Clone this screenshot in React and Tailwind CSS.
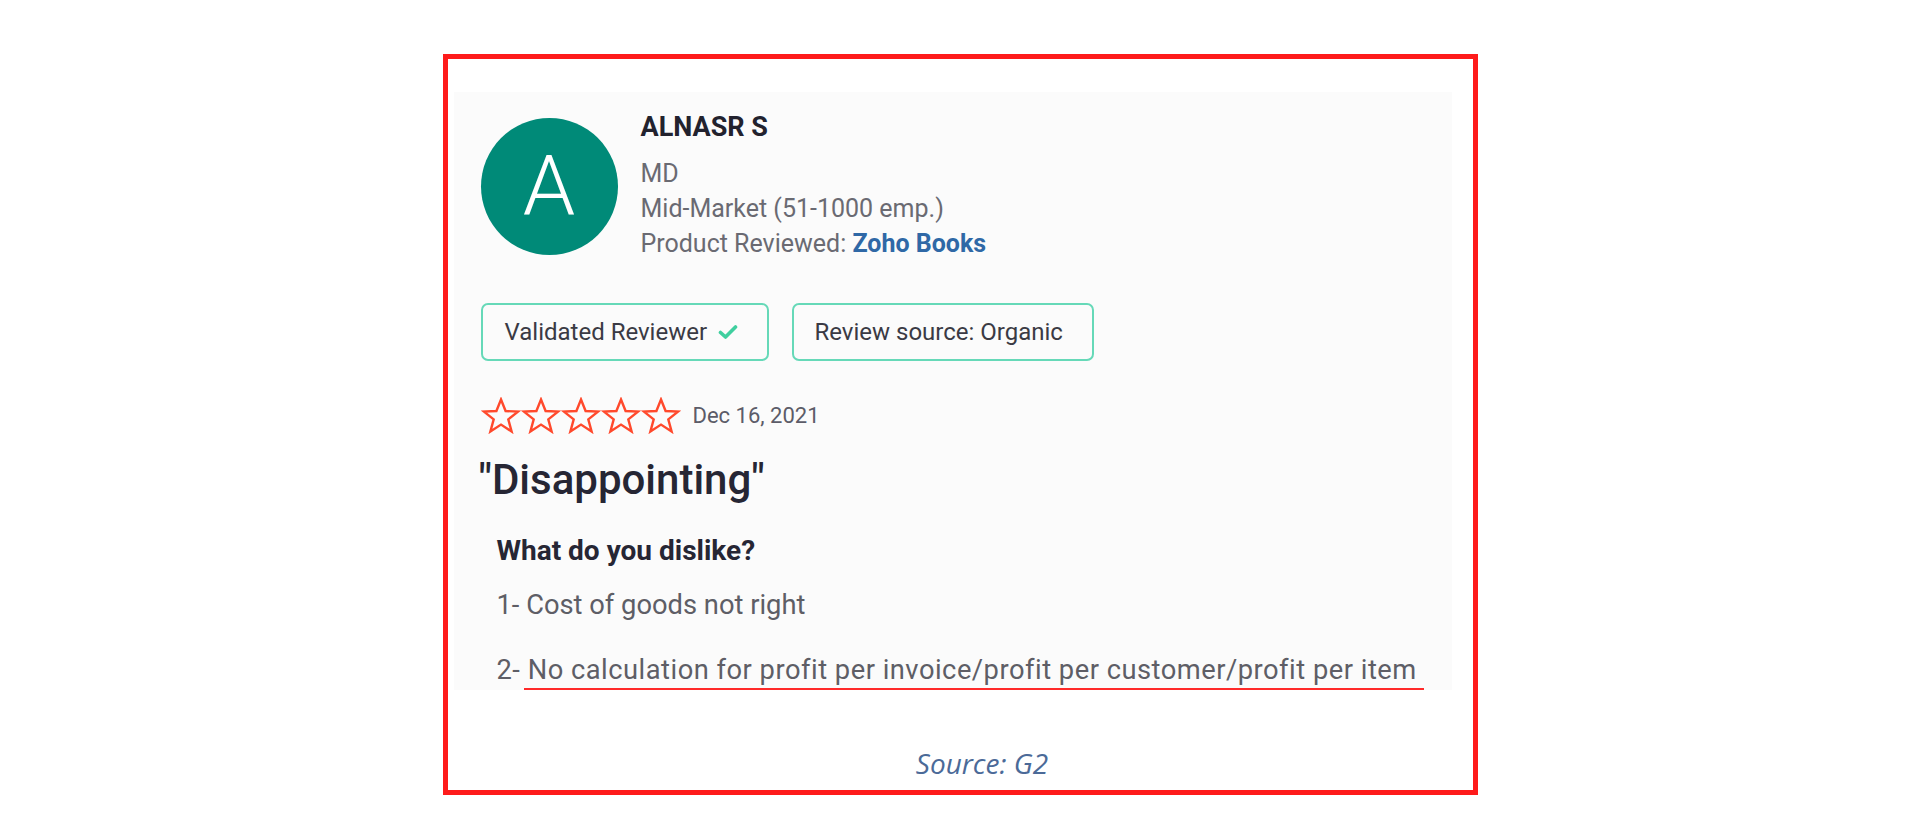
import React from 'react';

const font = { fontFamily: 'Roboto, "Noto Sans", sans-serif' };

function Star() {
  return (
    <svg width="40" height="37" viewBox="0 0 40 37" fill="none">
      <path
        d="M20 2.5 L24.6 14 L37 14.6 L27.3 22.4 L30.6 34.5 L20 27.6 L9.4 34.5 L12.7 22.4 L3 14.6 L15.4 14 Z"
        stroke="#ff492c"
        strokeWidth="2.4"
        strokeLinejoin="miter"
      />
    </svg>
  );
}

function Check() {
  return (
    <svg width="20" height="16" viewBox="0 0 20 16" fill="none">
      <path d="M2.5 8.5 L7.5 13 L17.5 3" stroke="#3fcf9f" strokeWidth="3.6" strokeLinecap="round" strokeLinejoin="round" />
    </svg>
  );
}

export default function App() {
  return (
    <div className="min-h-screen bg-white pt-[54px]" style={font}>
      <div className="mx-auto w-[1035px] h-[741px] border-[5px] border-[#fe1b1b] bg-white px-[6px] pt-[33px]">
        {/* review card */}
        <div className="bg-[#fbfbfb] pl-[27px] pt-[19px] w-[998px]">
          <div className="flex items-start gap-[23px]">
            <div className="mt-[7px] w-[137px] h-[137px] rounded-full bg-[#008a78] flex items-center justify-center shrink-0">
              <span className="text-white text-[84px] font-light leading-none">A</span>
            </div>
            <div>
              <div className="text-[27px] font-bold leading-[32px] text-[#22222e]">ALNASR S</div>
              <div className="mt-[13px] text-[25px] leading-[35px] text-[#6a6a72]">
                <div>MD</div>
                <div>Mid-Market (51-1000 emp.)</div>
                <div>
                  Product Reviewed: <span className="font-bold text-[#2f68a6]">Zoho Books</span>
                </div>
              </div>
            </div>
          </div>

          <div className="mt-[42px] flex gap-[23px]">
            <div className="h-[58px] w-[288px] rounded-[7px] border-2 border-[#66d9b8] flex items-center pl-[22px] gap-[11px] text-[24px] text-[#3a3a44]">
              <span>Validated Reviewer</span>
              <Check />
            </div>
            <div className="h-[58px] w-[302px] rounded-[7px] border-2 border-[#66d9b8] flex items-center pl-[21px] text-[24px] text-[#3a3a44]">
              Review source: Organic
            </div>
          </div>

          <div className="mt-[36px] flex items-center">
            <div className="flex">
              <Star />
              <Star />
              <Star />
              <Star />
              <Star />
            </div>
            <span className="ml-[12px] text-[22px] text-[#5c5c68]">Dec 16, 2021</span>
          </div>

          <h1 className="mt-[22px] -ml-[2px] text-[42px] font-medium leading-[48px] text-[#262634]">"Disappointing"</h1>

          <div className="pl-[16px] mt-[31px]">
            <div className="text-[28px] font-bold leading-[32px] text-[#262634]">What do you dislike?</div>
            <div className="mt-[20px] text-[27.3px] leading-[36px] text-[#5e5e66]">1- Cost of goods not right</div>
            <div className="mt-[29px] text-[27.3px] tracking-[0.5px] leading-[36px] text-[#5e5e66]">
              2- No calculation for profit per invoice/profit per customer/profit per item
            </div>
            <div className="ml-[27px] w-[900px] h-[2px] bg-[#ff2a2a]" />
          </div>
        </div>

        <div
          className="mt-[57px] pl-[44px] text-center text-[28px] italic leading-[32px] text-[#4b6a98]"
          style={{ fontFamily: '"Open Sans", sans-serif' }}
        >
          Source: G2
        </div>
      </div>
    </div>
  );
}
